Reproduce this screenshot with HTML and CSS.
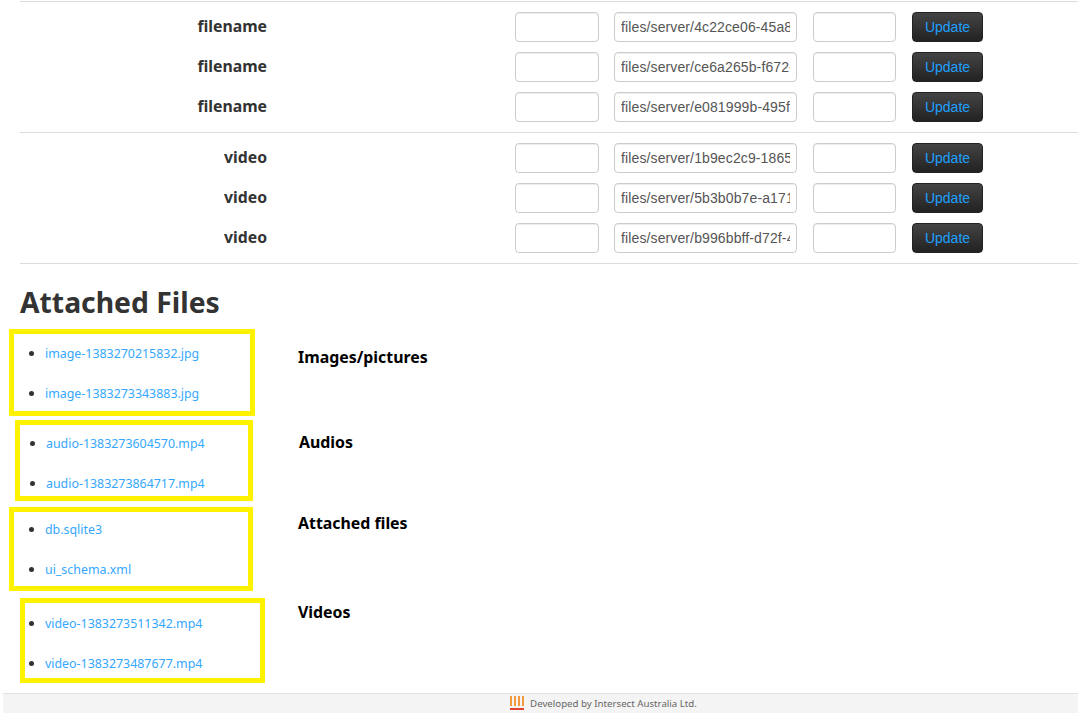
FILE: index.html
```html
<!DOCTYPE html>
<html lang="en">
<head>
  <meta charset="UTF-8" />
  <title>Attached Files</title>
  <link rel="stylesheet" href="styles.css">
</head>
<body>
  <div class="container">
    <div class="meta-section">
      <div class="meta-row">
        <label class="meta-label">filename</label>
        <input class="field field-first" type="text">
        <input class="field field-path" type="text" value="files/server/4c22ce06-45a8-4b1e-9d37-aa0c">
        <input class="field field-last" type="text">
        <button class="update-btn">Update</button>
      </div>
      <div class="meta-row">
        <label class="meta-label">filename</label>
        <input class="field field-first" type="text">
        <input class="field field-path" type="text" value="files/server/ce6a265b-f672-4e02-8c11-7b3d">
        <input class="field field-last" type="text">
        <button class="update-btn">Update</button>
      </div>
      <div class="meta-row">
        <label class="meta-label">filename</label>
        <input class="field field-first" type="text">
        <input class="field field-path" type="text" value="files/server/e081999b-495f-4a60-b2d4-19fe">
        <input class="field field-last" type="text">
        <button class="update-btn">Update</button>
      </div>
    </div>
    <div class="meta-section">
      <div class="meta-row">
        <label class="meta-label">video</label>
        <input class="field field-first" type="text">
        <input class="field field-path" type="text" value="files/server/1b9ec2c9-1865-47d3-a0e6-52cb">
        <input class="field field-last" type="text">
        <button class="update-btn">Update</button>
      </div>
      <div class="meta-row">
        <label class="meta-label">video</label>
        <input class="field field-first" type="text">
        <input class="field field-path" type="text" value="files/server/5b3b0b7e-a171-4c98-be20-6f14">
        <input class="field field-last" type="text">
        <button class="update-btn">Update</button>
      </div>
      <div class="meta-row">
        <label class="meta-label">video</label>
        <input class="field field-first" type="text">
        <input class="field field-path" type="text" value="files/server/b996bbff-d72f-4e35-91ac-08d7">
        <input class="field field-last" type="text">
        <button class="update-btn">Update</button>
      </div>
    </div>
    <div class="meta-end"></div>
  </div>

  <h2 class="files-title">Attached Files</h2>

  <div class="file-group group-images">
    <ul class="file-box">
      <li><a href="#">image-1383270215832.jpg</a></li>
      <li><a href="#">image-1383273343883.jpg</a></li>
    </ul>
    <span class="file-note">Images/pictures</span>
  </div>
  <div class="file-group group-audios">
    <ul class="file-box">
      <li><a href="#">audio-1383273604570.mp4</a></li>
      <li><a href="#">audio-1383273864717.mp4</a></li>
    </ul>
    <span class="file-note">Audios</span>
  </div>
  <div class="file-group group-attached">
    <ul class="file-box">
      <li><a href="#">db.sqlite3</a></li>
      <li><a href="#">ui_schema.xml</a></li>
    </ul>
    <span class="file-note">Attached files</span>
  </div>
  <div class="file-group group-videos">
    <ul class="file-box">
      <li><a href="#">video-1383273511342.mp4</a></li>
      <li><a href="#">video-1383273487677.mp4</a></li>
    </ul>
    <span class="file-note">Videos</span>
  </div>

  <footer class="page-footer">
    <svg class="footer-logo" width="14" height="15" viewBox="0 0 14 15" aria-hidden="true">
      <path d="M1 0v10M5 0v10M9 0v10M13 0v10" stroke="#f39a3e" stroke-width="2" fill="none"/>
      <path d="M0 13h14" stroke="#e0432f" stroke-width="2" fill="none"/>
    </svg>
    <span>Developed by Intersect Australia Ltd.</span>
  </footer>
</body>
</html>
```

FILE: styles.css
```css
html, body {
  margin: 0;
  padding: 0;
  background: #fff;
  overflow: hidden;
}
body {
  font-family: "Noto Sans", "Open Sans", sans-serif;
  color: #333;
  padding-top: 1px;
}

.container {
  margin-left: 20px;
}
.meta-section {
  border-top: 1px solid #ddd;
  padding-top: 10px;
}
.meta-end {
  border-top: 1px solid #ddd;
}
.meta-row {
  display: flex;
  align-items: center;
  height: 30px;
  margin-bottom: 10px;
}
.meta-label {
  width: 247px;
  padding-bottom: 2px;
  text-align: right;
  font-size: 15.8px;
  font-weight: 700;
  color: #333;
}
.field {
  box-sizing: border-box;
  height: 30px;
  padding: 4px 6px;
  border: 1px solid #ccc;
  border-radius: 4px;
  background: #fff;
  box-shadow: inset 0 1px 1px rgba(0, 0, 0, 0.075);
  font-family: "Liberation Sans", Arial, sans-serif;
  font-size: 14px;
  letter-spacing: 0.12px;
  color: #555;
}
.field-first {
  width: 84px;
  margin-left: 248px;
}
.field-path {
  width: 183px;
  margin-left: 15px;
}
.field-last {
  width: 83px;
  margin-left: 16px;
}
.update-btn {
  box-sizing: border-box;
  width: 71px;
  height: 30px;
  margin-left: 16px;
  padding: 0;
  border: 1px solid #222;
  border-radius: 4px;
  background: linear-gradient(to bottom, #444, #222);
  font-family: "Liberation Sans", Arial, sans-serif;
  font-size: 14px;
  color: #1ea0ff;
}

.files-title {
  margin: 18px 0 7px 20px;
  font-size: 28.3px;
  line-height: 40px;
  font-weight: 700;
  color: #333;
}

.file-group {
  display: flex;
  align-items: flex-start;
}
.file-box {
  box-sizing: border-box;
  margin: 0;
  border: 5px solid #fff200;
  list-style: none;
}
.file-box li {
  display: flex;
  align-items: center;
  height: 38px;
  margin: 0 0 2px -16px;
  font-size: 12.4px;
}
.file-box li::before {
  content: "";
  flex: none;
  width: 5px;
  height: 5px;
  margin-right: 11px;
  border-radius: 50%;
  background: #333;
}
.file-box a {
  color: #35a7ff;
  text-decoration: none;
}
.file-note {
  font-size: 15.9px;
  font-weight: 700;
  line-height: 22px;
  color: #000;
}

.group-images .file-box {
  width: 246px;
  height: 87px;
  margin-left: 9px;
  padding-left: 31px;
}
.group-images .file-note {
  margin: 17px 0 0 43px;
}
.group-audios {
  margin-top: 4px;
}
.group-audios .file-box {
  width: 238px;
  height: 81px;
  margin-left: 15px;
  padding-left: 26px;
}
.group-audios li {
  height: 36px;
  margin-bottom: 4px;
}
.group-audios .file-note {
  margin: 11px 0 0 46px;
}
.group-attached {
  margin-top: 6px;
}
.group-attached .file-box {
  width: 244px;
  height: 84px;
  margin-left: 9px;
  padding-left: 31px;
}
.group-attached li {
  height: 34px;
  margin-bottom: 6px;
}
.group-attached .file-note {
  margin: 5px 0 0 45px;
}
.group-videos {
  margin-top: 7px;
}
.group-videos .file-box {
  width: 245px;
  height: 85px;
  margin-left: 20px;
  padding: 1px 0 0 20px;
}
.group-videos .file-note {
  margin: 3px 0 0 33px;
}

.page-footer {
  display: flex;
  align-items: center;
  justify-content: center;
  gap: 6px;
  box-sizing: border-box;
  height: 20px;
  margin: 10px 0 0 3px;
  padding-left: 126px;
  border-top: 1px solid #e2e2e2;
  background: #f4f4f4;
  font-size: 9.7px;
  color: #666;
}
.footer-logo {
  flex: none;
}
```
